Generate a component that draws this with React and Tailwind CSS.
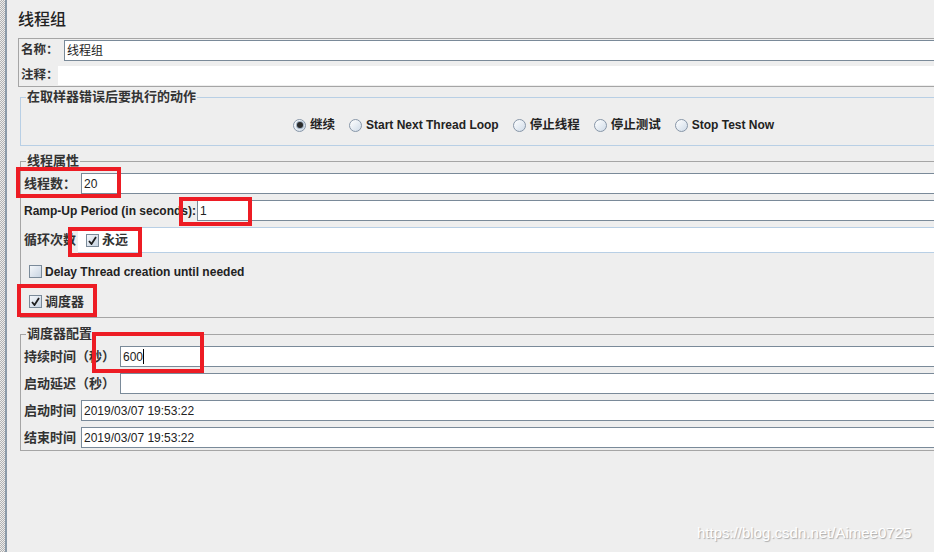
import React from 'react';

const Field = ({ value, caret }) => (
    <div className="flex-1 h-[21px] bg-white border-y border-l border-[#7a8a99] flex items-center pl-[2px] text-[12px] text-[#222]">
        {value}
        {caret && <span className="w-px h-[15px] bg-black" />}
    </div>
);

const Radio = ({ checked }) => (
    <span className="w-[13px] h-[13px] rounded-full border border-[#8796a8] bg-gradient-to-br from-white to-[#cfdbe8] flex items-center justify-center shrink-0">
        {checked && <span className="w-[6px] h-[6px] rounded-full bg-[#2b2b2b] shadow-[0_0_0_1px_#9fb0c2]" />}
    </span>
);

const Check = ({ checked }) => (
    <span className="w-[13px] h-[13px] border border-[#7a8a99] bg-gradient-to-br from-[#f4f7fa] to-[#c8d4e2] flex items-end justify-center shrink-0">
        {checked && (
            <svg width="9" height="9" viewBox="0 0 9 9" className="mb-[1px]">
                <path d="M1 5 L3.5 8 L8 1" stroke="#1f1f1f" strokeWidth="1.8" fill="none" />
            </svg>
        )}
    </span>
);

const Row = ({ label, labelW, value, caret, mt = 'mt-[6px]' }) => (
    <div className={`flex items-center ${mt}`}>
        <span className={`${labelW} shrink-0 font-bold whitespace-nowrap`}>{label}</span>
        <Field value={value} caret={caret} />
    </div>
);

const Legend = ({ children, ml = 'ml-[5px]' }) => (
    <legend className={`${ml} px-[1px] leading-[14px] text-[13px] font-bold text-[#333] whitespace-nowrap`}>{children}</legend>
);

const radios = [
    { label: '继续', checked: true },
    { label: 'Start Next Thread Loop' },
    { label: '停止线程' },
    { label: '停止测试' },
    { label: 'Stop Test Now' },
];

export default function App() {
    return (
        <div className="relative w-[934px] h-[552px] overflow-hidden bg-[#eeeeee] flex font-['Liberation_Sans','Noto_Sans_CJK_SC',sans-serif] text-[13px] text-[#333]">
            {/* left splitter */}
            <div className="w-[5px] shrink-0 bg-[repeating-conic-gradient(#b2b2b2_0_25%,#ececec_0_50%)] bg-[length:2px_2px]" />
            <div className="w-[2px] shrink-0 bg-[#8c9aa8]" />
            <div className="w-[1px] shrink-0" />

            <div className="w-[1000px] shrink-0 pl-[10px]">
                <div className="mt-[10px] h-[20px] leading-[20px] text-[16px] font-medium text-[#222]">线程组</div>

                <div className="mt-[8px] h-[49px] border border-[#a5a5a5] border-r-0">
                    <div className="flex items-center mt-[1px]">
                        <span className="w-[45px] pl-[2px] shrink-0 font-bold whitespace-nowrap text-[12.5px]">名称：</span>
                        <Field value="线程组" />
                    </div>
                    <div className="flex items-center mt-[5px]">
                        <span className="w-[39px] pl-[2px] shrink-0 font-bold whitespace-nowrap text-[12.5px] overflow-hidden">注释：</span>
                        <div className="flex-1 h-[19px] bg-white" />
                    </div>
                </div>

                <fieldset className="ml-[2px] mt-[3px] border border-[#b8cfe5] border-r-0">
                    <Legend>在取样器错误后要执行的动作</Legend>
                    <div className="flex items-center h-[16px] mt-[13px] mb-[12px] pl-[272px] text-[12px] font-bold text-[#222] whitespace-nowrap">
                        {radios.map((r, i) => (
                            <div key={i} className="flex items-center gap-[4px] mr-[14px]">
                                <Radio checked={r.checked} />
                                <span className={/[a-z]/i.test(r.label) ? '' : 'text-[12.5px]'}>{r.label}</span>
                            </div>
                        ))}
                    </div>
                </fieldset>

                <fieldset className="ml-[2px] mt-[8px] border border-[#a5a5a5] border-r-0 pl-[3px] pb-[9px]">
                    <Legend ml="ml-[2px]">线程属性</Legend>
                    <Row label="线程数：" labelW="w-[57px]" value="20" mt="mt-[5px]" />
                    <div className="flex items-center mt-[6px]">
                        <span className="w-[173px] shrink-0 font-bold text-[12px] text-[#222] whitespace-nowrap">Ramp-Up Period (in seconds):</span>
                        <Field value="1" />
                    </div>
                    <div className="flex items-center mt-[6px]">
                        <span className="w-[54px] shrink-0 font-bold whitespace-nowrap">循环次数</span>
                        <div className="flex-1 h-[26px] bg-white border-y border-[#b8cfe5] flex items-center pl-[8px] gap-[3px]">
                            <Check checked />
                            <span className="font-bold">永远</span>
                        </div>
                    </div>
                    <div className="flex items-center mt-[12px] ml-[5px] h-[13px] gap-[3px]">
                        <Check />
                        <span className="font-bold text-[12px] text-[#222] whitespace-nowrap">Delay Thread creation until needed</span>
                    </div>
                    <div className="flex items-center mt-[17px] ml-[5px] h-[13px] gap-[3px]">
                        <Check checked />
                        <span className="font-bold">调度器</span>
                    </div>
                </fieldset>

                <fieldset className="ml-[2px] mt-[9px] border border-[#a5a5a5] border-r-0 pl-[3px] pb-[2px]">
                    <Legend ml="ml-[2px]">调度器配置</Legend>
                    <Row label="持续时间（秒）" labelW="w-[96px]" value="600" caret mt="mt-[5px]" />
                    <Row label="启动延迟（秒）" labelW="w-[96px]" value="" />
                    <Row label="启动时间" labelW="w-[57px]" value="2019/03/07 19:53:22" />
                    <Row label="结束时间" labelW="w-[57px]" value="2019/03/07 19:53:22" />
                </fieldset>
            </div>

            {/* annotation boxes */}
            <div className="absolute left-[16px] top-[167px] w-[105px] h-[31px] border-4 border-[#ed1c24]" />
            <div className="absolute left-[179px] top-[197px] w-[73px] h-[29px] border-4 border-[#ed1c24]" />
            <div className="absolute left-[68px] top-[227px] w-[74px] h-[30px] border-4 border-[#ed1c24]" />
            <div className="absolute left-[17px] top-[284px] w-[80px] h-[33px] border-4 border-[#ed1c24]" />
            <div className="absolute left-[92px] top-[332px] w-[112px] h-[41px] border-4 border-[#ed1c24]" />

            <div className="absolute left-[697px] top-[524px] text-[15px] leading-[18px] text-white [text-shadow:1px_1px_1px_#aaa]">
                https://blog.csdn.net/Aimee0725
            </div>
        </div>
    );
}
